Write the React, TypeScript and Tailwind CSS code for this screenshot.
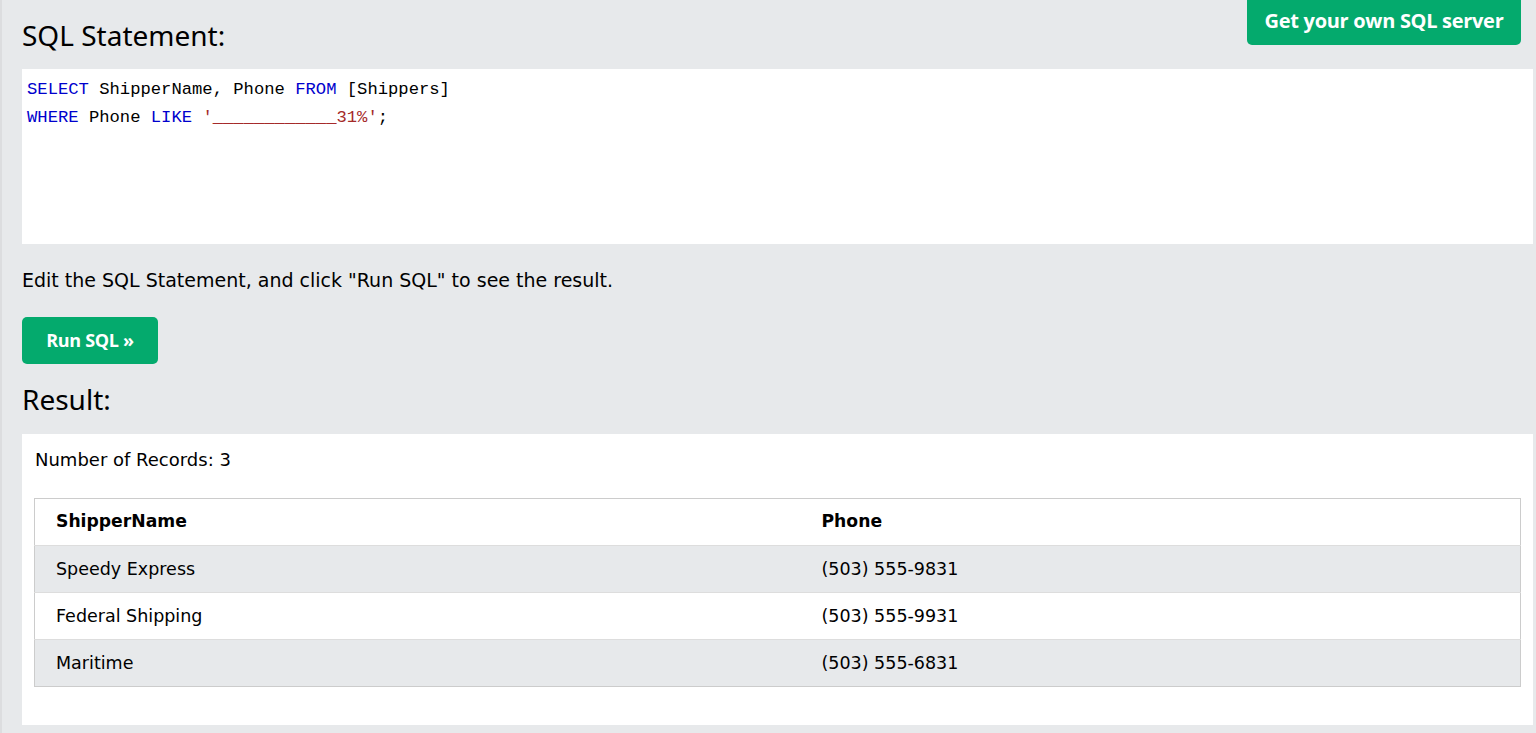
import React from "react";

const rows = [
  ["Speedy Express", "(503) 555-9831"],
  ["Federal Shipping", "(503) 555-9931"],
  ["Maritime", "(503) 555-6831"],
];

export default function App() {
  return (
    <div className="w-[1536px] h-[733px] overflow-hidden bg-[#e7e9eb] border-l-2 border-[#dcdddf] pl-[20px] pr-[3px] relative">
      <a className="absolute right-[15px] top-0 h-[45px] w-[274px] rounded-b-[5px] bg-[#04aa6d] text-white flex items-center justify-center pb-[3px] text-[20px] font-bold font-['Open_Sans',sans-serif] tracking-[-0.3px]">
        Get your own SQL server
      </a>
      <h2 className="pt-[15px] h-[69px] text-[28px] leading-[40px] font-['Noto_Sans',sans-serif] text-black">
        SQL Statement:
      </h2>
      <div className="bg-white h-[175px] pl-[5px] pt-[7px] font-['Liberation_Mono',monospace] text-[17.2px] leading-[28px] text-black">
        <div>
          <span className="text-[#0000cd]">SELECT</span> ShipperName, Phone <span className="text-[#0000cd]">FROM</span> [Shippers]
        </div>
        <div>
          <span className="text-[#0000cd]">WHERE</span> Phone <span className="text-[#0000cd]">LIKE</span>{" "}
          <span className="text-[#a52a2a]">'____________31%'</span>;
        </div>
      </div>
      <p className="mt-[23px] text-[19px] leading-[26px] font-['DejaVu_Sans',sans-serif] text-black">
        Edit the SQL Statement, and click "Run SQL" to see the result.
      </p>
      <button className="mt-[24px] w-[136px] h-[47px] rounded-[5px] bg-[#04aa6d] text-white text-[18px] font-bold font-['Open_Sans',sans-serif] tracking-[-0.3px]">
        Run SQL »
      </button>
      <h2 className="mt-[15px] h-[55px] text-[28px] leading-[40px] font-['Noto_Sans',sans-serif] text-black">
        Result:
      </h2>
      <div className="bg-white h-[291px] pl-[12px] pr-[12px] pt-[14px] font-['DejaVu_Sans',sans-serif] text-[17.5px] text-black">
        <div className="leading-[24px] text-[18px] pl-[1px]">Number of Records: 3</div>
        <table className="mt-[26px] w-full border-collapse border border-[#cccccc]">
          <thead>
            <tr className="h-[47px] bg-white">
              <th className="text-left font-bold pl-[21px] w-[766px] text-[17.2px]">ShipperName</th>
              <th className="text-left font-bold pl-[21px] text-[17.2px]">Phone</th>
            </tr>
          </thead>
          <tbody>
            {rows.map((r, i) => (
              <tr key={i} className={`h-[47px] border-t border-[#dddddd] ${i % 2 === 0 ? "bg-[#e7e9eb]" : "bg-white"}`}>
                <td className="pl-[21px]">{r[0]}</td>
                <td className="pl-[21px]">{r[1]}</td>
              </tr>
            ))}
          </tbody>
        </table>
      </div>
    </div>
  );
}
